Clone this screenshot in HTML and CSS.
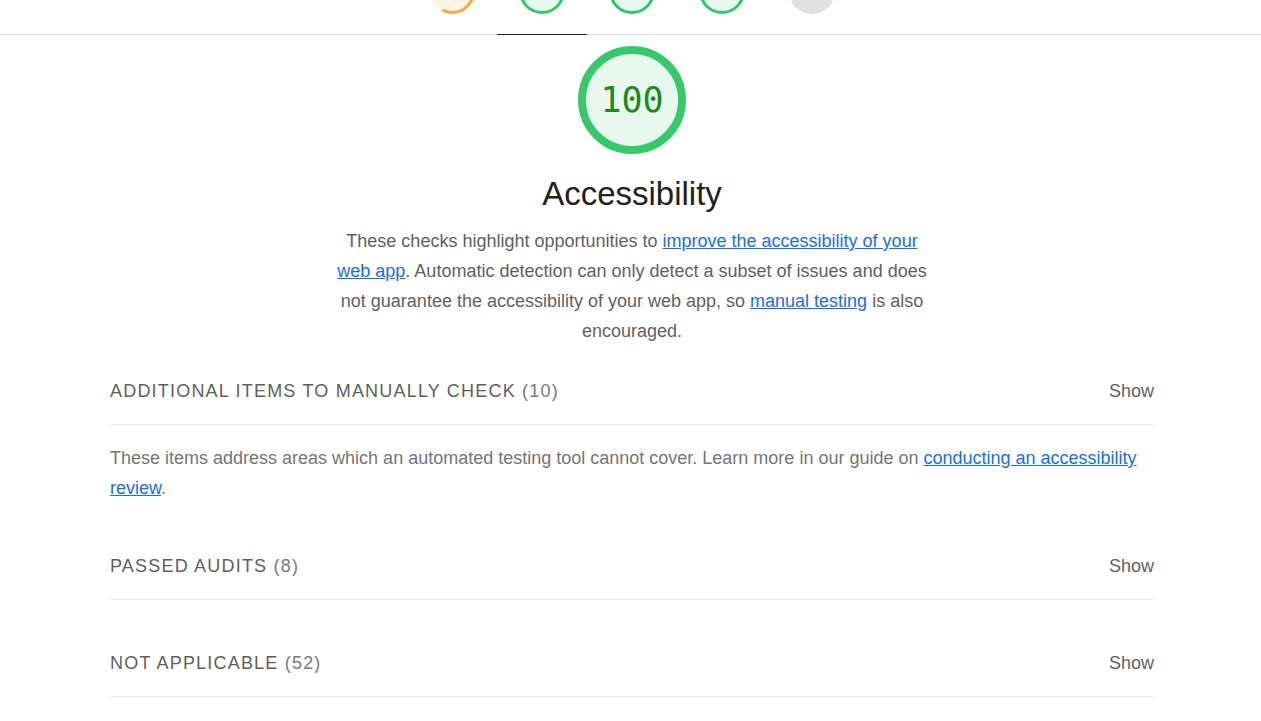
FILE: index.html
```html
<!DOCTYPE html>
<html>
<head>
<meta charset="utf-8">
<link rel="stylesheet" href="styles.css">
</head>
<body>
<header class="sticky">
  <div class="tabs">
    <div class="tab">
      <svg class="mini" viewBox="0 0 48 48" width="48" height="48">
        <circle cx="24" cy="24" r="21.5" class="mini-fill avg"></circle>
        <circle cx="24" cy="24" r="21.5" class="mini-arc avg-arc" stroke-dasharray="76 200" transform="rotate(-90 24 24)"></circle>
      </svg>
    </div>
    <div class="tab active">
      <svg class="mini" viewBox="0 0 48 48" width="48" height="48">
        <circle cx="24" cy="24" r="21.5" class="mini-fill pass"></circle>
      </svg>
    </div>
    <div class="tab">
      <svg class="mini" viewBox="0 0 48 48" width="48" height="48">
        <circle cx="24" cy="24" r="21.5" class="mini-fill pass"></circle>
      </svg>
    </div>
    <div class="tab">
      <svg class="mini" viewBox="0 0 48 48" width="48" height="48">
        <circle cx="24" cy="24" r="21.5" class="mini-fill pass"></circle>
      </svg>
    </div>
    <div class="tab">
      <svg class="mini" viewBox="0 0 48 48" width="48" height="48">
        <circle cx="24" cy="24" r="23" class="mini-na"></circle>
      </svg>
    </div>
  </div>
</header>

<main class="content">
  <section class="category-header">
    <div class="gauge">
      <svg viewBox="0 0 112 112" width="112" height="112">
        <circle cx="56" cy="56" r="50" class="big-ring"></circle>
      </svg>
      <span class="gauge-score">100</span>
    </div>
    <h1 class="cat-title">Accessibility</h1>
    <p class="cat-desc">These checks highlight opportunities to <a href="#">improve the accessibility of your web app</a>. Automatic detection can only detect a subset of issues and does not guarantee the accessibility of your web app, so <a href="#">manual testing</a> is also encouraged.</p>
  </section>

  <section class="clump">
    <div class="clump-head">
      <span class="clump-title">Additional items to manually check <span class="count">(10)</span></span>
      <span class="show">Show</span>
    </div>
    <p class="clump-desc">These items address areas which an automated testing tool cannot cover. Learn more in our guide on <a href="#">conducting an accessibility review</a>.</p>
  </section>

  <section class="clump">
    <div class="clump-head">
      <span class="clump-title">Passed audits <span class="count">(8)</span></span>
      <span class="show">Show</span>
    </div>
  </section>

  <section class="clump">
    <div class="clump-head">
      <span class="clump-title">Not applicable <span class="count">(52)</span></span>
      <span class="show">Show</span>
    </div>
  </section>
</main>
</body>
</html>
```

FILE: styles.css
```css
* { box-sizing: border-box; }

html, body {
  margin: 0;
  padding: 0;
  background: #ffffff;
  font-family: "Liberation Sans", Arial, sans-serif;
  color: #212121;
}

.sticky {
  height: 35px;
  box-shadow: inset 0 -1px 0 #e0e0e0;
  overflow: hidden;
}

.tabs {
  display: flex;
  width: 450px;
  margin-left: 407px;
  height: 35px;
}

.tab {
  width: 90px;
  height: 35px;
  display: flex;
  justify-content: center;
  align-items: flex-start;
}

.tab.active {
  border-bottom: 1px solid #212121;
}

.mini {
  display: block;
  margin-top: -33px;
}

.mini-fill {
  stroke-width: 3;
}

.mini-fill.pass {
  fill: #e7f8ee;
  stroke: #2fc76a;
}

.mini-fill.avg {
  fill: #fff4e6;
  stroke: #fff4e6;
}

.mini-arc {
  fill: none;
  stroke-width: 3;
  stroke-linecap: round;
}

.avg-arc {
  stroke: #ffa73a;
}

.mini-na {
  fill: #e0e0e0;
}

.content {
  width: 1044px;
  margin-left: 110px;
}

.category-header {
  display: flex;
  flex-direction: column;
  align-items: center;
}

.gauge {
  position: relative;
  width: 112px;
  height: 112px;
  margin-top: 9px;
}

.gauge svg {
  display: block;
}

.big-ring {
  fill: #e8f8ef;
  stroke: #36c96c;
  stroke-width: 8;
}

.gauge-score {
  position: absolute;
  inset: 0;
  display: flex;
  align-items: center;
  justify-content: center;
  font-family: "DejaVu Sans Mono", "Liberation Mono", monospace;
  font-size: 35px;
  color: #1b8a1b;
  padding-bottom: 1px;
}

.cat-title {
  margin: 18px 0 0;
  font-size: 33px;
  line-height: 40px;
  font-weight: normal;
  color: #212121;
}

.cat-desc {
  width: 600px;
  margin: 12px 0 0;
  font-size: 18px;
  line-height: 30px;
  text-align: center;
  color: #616161;
}

a {
  color: #1a6cf0;
  text-decoration: underline;
}

.clump {
  margin-top: 28px;
}

.category-header + .clump {
  margin-top: 10px;
}

.clump-head {
  display: flex;
  justify-content: space-between;
  align-items: center;
  padding: 20px 0 18px;
  border-bottom: 1px solid #e6e6e6;
  font-size: 18px;
  line-height: 30px;
}

.clump-title {
  text-transform: uppercase;
  letter-spacing: 1.2px;
  color: #5f5f5f;
}

.count {
  color: #7a7a7a;
}

.show {
  color: #616161;
}

.clump-desc {
  margin: 18px 0 1px;
  font-size: 18px;
  line-height: 30px;
  color: #757575;
}
```
